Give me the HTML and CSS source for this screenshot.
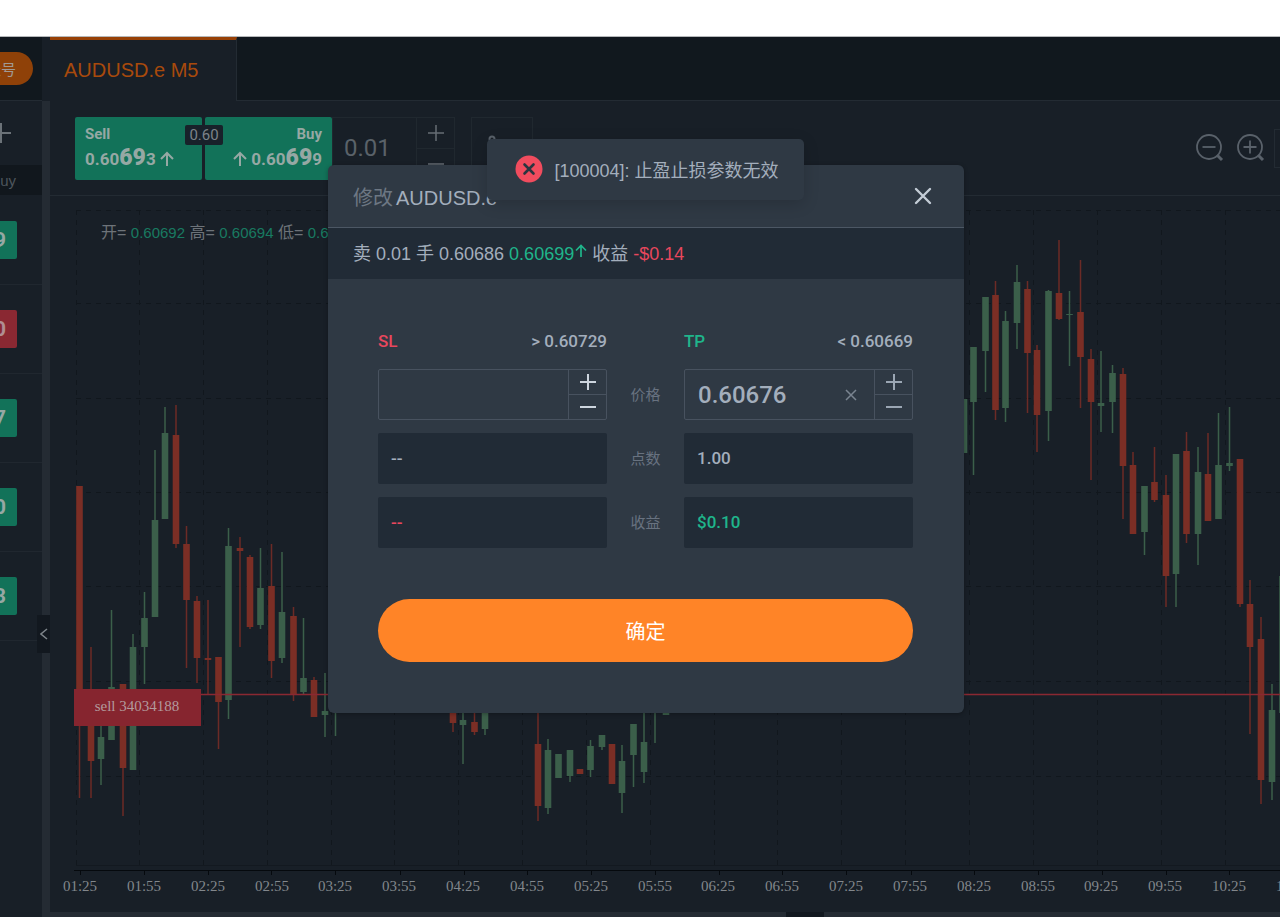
FILE: index.html
```html
<!DOCTYPE html>
<html lang="zh">
<head>
    <meta charset="UTF-8">
    <meta name="viewport" content="width=device-width, initial-scale=1.0">
    <title>AUDUSD.e M5</title>
    <link rel="stylesheet" href="styles.css">
</head>
<body>
    <div class="browser-bar"></div>
    <div class="app">
        <aside class="sidebar">
            <div class="sidebar-top">
                <button type="button" class="account-btn">账号</button>
            </div>
            <div class="sidebar-add">
                <button type="button" class="icon-btn" aria-label="添加">
                    <svg width="22" height="22" viewBox="0 0 22 22"><path d="M11 1V21M1 11H21" stroke="#6b7278" stroke-width="2"/></svg>
                </button>
            </div>
            <div class="sidebar-head">Buy</div>
            <ul class="quotes">
                <li><span class="quote up">9</span></li>
                <li><span class="quote down">0</span></li>
                <li><span class="quote up">7</span></li>
                <li><span class="quote up">0</span></li>
                <li><span class="quote up">3</span></li>
            </ul>
        </aside>
        <div class="splitter">
            <button type="button" class="collapse-btn" aria-label="收起">
                <svg width="8" height="14" viewBox="0 0 8 14"><path d="M7 2L1 7L7 12" fill="none" stroke="#7d8489" stroke-width="1.5"/></svg>
            </button>
        </div>

        <main class="main">
            <nav class="tabs">
                <a href="#" class="tab active">AUDUSD.e M5</a>
            </nav>

            <div class="toolbar">
                <div class="trade">
                    <button type="button" class="trade-btn">
                        <span>Sell</span>
                        <span class="price">0.60<b>69</b>3<svg width="14" height="16" viewBox="0 0 14 16"><path d="M7 15V2M1 8L7 2L13 8" fill="none" stroke="#96a8a4" stroke-width="2"/></svg></span>
                    </button>
                    <button type="button" class="trade-btn buy">
                        <span>Buy</span>
                        <span class="price"><svg width="14" height="16" viewBox="0 0 14 16"><path d="M7 15V2M1 8L7 2L13 8" fill="none" stroke="#96a8a4" stroke-width="2"/></svg>0.60<b>69</b>9</span>
                    </button>
                    <span class="spread">0.60</span>
                </div>
                <div class="volume">
                    <input type="text" value="0.01" aria-label="手数">
                    <div class="stepper">
                        <button type="button" aria-label="增加"><svg width="16" height="16" viewBox="0 0 16 16"><path d="M8 0V16M0 8H16" stroke="currentColor" stroke-width="1.5"/></svg></button>
                        <button type="button" aria-label="减少"><svg width="16" height="16" viewBox="0 0 16 16"><path d="M0 8H16" stroke="currentColor" stroke-width="1.5"/></svg></button>
                    </div>
                </div>
                <button type="button" class="tool-box" aria-label="图表类型">
                    <svg width="26" height="26" viewBox="0 0 26 26" fill="none" stroke="#59616a" stroke-width="2"><circle cx="4" cy="4" r="2.500"/><path d="M4 8V25H25"/></svg>
                </button>
                <div class="tools">
                    <button type="button" class="icon-btn" aria-label="缩小">
                        <svg width="28" height="28" viewBox="0 0 28 28" fill="none" stroke="#59616a" stroke-width="1.8"><circle cx="13" cy="13" r="12"/><path d="M6.500 13H19.500"/><path d="M21.500 21.500L26 26" stroke-width="3"/></svg>
                    </button>
                    <button type="button" class="icon-btn" aria-label="放大">
                        <svg width="28" height="28" viewBox="0 0 28 28" fill="none" stroke="#59616a" stroke-width="1.8"><circle cx="13" cy="13" r="12"/><path d="M6.500 13H19.500M13 6.500V19.500"/><path d="M21.500 21.500L26 26" stroke-width="3"/></svg>
                    </button>
                </div>
                <span class="tool-edge"></span>
            </div>

            <svg class="chart" width="100%" height="716">
                <!-- 网格 -->
                <g class="grid">
                    <path d="M26.500 14V671M89.500 14V671M153.500 14V671M217.500 14V671M281.500 14V671M344.500 14V671M408.500 14V671M472.500 14V671M536.500 14V671M600.500 14V671M664.500 14V671M727.500 14V671M791.500 14V671M855.500 14V671M919.500 14V671M983.500 14V671M1047.500 14V671M1111.500 14V671M1175.500 14V671"/>
                    <line x1="26" x2="100%" y1="14.500" y2="14.500"/>
                    <line x1="26" x2="100%" y1="107.500" y2="107.500"/>
                    <line x1="26" x2="100%" y1="202.500" y2="202.500"/>
                    <line x1="26" x2="100%" y1="296.500" y2="296.500"/>
                    <line x1="26" x2="100%" y1="390.500" y2="390.500"/>
                    <line x1="26" x2="100%" y1="485.500" y2="485.500"/>
                    <line x1="26" x2="100%" y1="580.500" y2="580.500"/>
                </g>

                <!-- 阳线 -->
                <path class="wick up" d="M51 530V589M61.500 414V544M83 438V574M94.500 396V488M105 254V421M115 211V323M178.500 332V523M210.500 352V433M232 356V467M253.500 422V499M275 477V541M285.500 504V540M413 504V568M435 504V539M498 543V618M520 554V586M540.500 544V581M552 539V554M572 549V617M583.500 528V591M594 516V587M605 504V547M923.500 151V279M935.500 101V196M955.500 115V226M967 69V153M998.500 94V245M1019.500 95V170M1051 155V236M1062.500 169V237M1094.500 290V359M1126 258V411M1148 251V369M1168.500 217V323M1179.500 211V275M1222 488V604"/>
                <path class="body up" d="M51 541V563M61.500 491V544M83 451V574M94.500 422V451M105 324V421M115 237V323M178.500 350V504M210.500 392V429M232 416V462M253.500 482V496M275 515V519M413 524V529M435 504V533M498 554V612M508.500 558V582M520 554V580M540.500 550V574M552 539V551M572 565V597M583.500 528V559M594 546V576M616 516V519M914 203V257M923.500 151V206M935.500 101V155M955.500 125V212M967 86V127M998.500 95V215M1019.500 118V119M1051 207V210M1062.500 177V206M1094.500 290V336M1126 258V378M1148 276V338M1168.500 269V323M1179.500 267V270M1222 514V586M1232.500 380V517"/>

                <!-- 阴线 -->
                <path class="wick down" d="M29.500 290V602M41 451V602M73 488V620M126 209V352M136.500 330V472M147 400V487M158 404V499M168.500 461V553M190 341V451M200 359V433M221.500 348V482M243.500 411V505M264 481V521M403 504V536M424.500 516V539M488 504V625M945.500 85V224M977.500 85V217M987 149V256M1009 44V124M1030.500 64V212M1041 153V284M1073 172V323M1083 256V338M1104.500 251V306M1116 279V411M1136.500 236V347M1158 237V325M1190 263V411M1200 384V538M1211 421V608"/>
                <path class="body down" d="M29.500 290V504M41 500V565M73 488V572M126 239V348M136.500 348V404M147 405V462M158 462V464M168.500 461V506M190 352V355M200 361V431M221.500 390V465M243.500 420V499M264 484V521M403 504V527M424.500 526V536M488 548V610M530 573V578M562 548V588M945.500 99V214M977.500 93V157M987 154V219M1009 97V123M1030.500 116V161M1041 163V206M1073 178V270M1083 269V338M1104.500 286V304M1116 299V380M1136.500 255V338M1158 278V325M1190 263V408M1200 408V451M1211 443V584"/>

                <!-- 持仓线 -->
                <line class="order-line" x1="151" x2="100%" y1="498.500" y2="498.500"/>
                <rect class="order-box" x="24" y="493" width="127" height="37"/>
                <text class="order-text" x="87" y="515">sell 34034188</text>

                <text class="ohlc" x="51" y="42">开= <tspan>0.60692</tspan> 高= <tspan>0.60694</tspan> 低= <tspan>0.60691</tspan></text>

                <!-- 时间轴 -->
                <line class="frame" x1="26" x2="100%" y1="669.500" y2="669.500"/>
                <line class="axis" x1="24" x2="100%" y1="674.500" y2="674.500"/>
                <path class="axis" d="M30.500 674V679M94.500 674V679M158.500 674V679M221.500 674V679M285.500 674V679M350.500 674V679M414.500 674V679M477.500 674V679M541.500 674V679M605.500 674V679M669.500 674V679M732.500 674V679M796.500 674V679M861.500 674V679M924.500 674V679M988.500 674V679M1052.500 674V679M1116.500 674V679M1179.500 674V679"/>
                <g class="times">
                    <text x="30" y="695">01:25</text>
                    <text x="94" y="695">01:55</text>
                    <text x="158" y="695">02:25</text>
                    <text x="222" y="695">02:55</text>
                    <text x="285" y="695">03:25</text>
                    <text x="349" y="695">03:55</text>
                    <text x="413" y="695">04:25</text>
                    <text x="477" y="695">04:55</text>
                    <text x="541" y="695">05:25</text>
                    <text x="605" y="695">05:55</text>
                    <text x="668" y="695">06:25</text>
                    <text x="732" y="695">06:55</text>
                    <text x="796" y="695">07:25</text>
                    <text x="860" y="695">07:55</text>
                    <text x="924" y="695">08:25</text>
                    <text x="988" y="695">08:55</text>
                    <text x="1051" y="695">09:25</text>
                    <text x="1115" y="695">09:55</text>
                    <text x="1179" y="695">10:25</text>
                    <text x="1243" y="695">10:55</text>
                </g>
            </svg>
            <div class="bottom-bar"><span class="bottom-handle"></span></div>
        </main>
    </div>

    <div class="modal-wrap">
        <div class="modal" role="dialog" aria-labelledby="modalTitle">
            <header class="modal-header">
                <h1 id="modalTitle"><span>修改</span>AUDUSD.e</h1>
                <button type="button" class="icon-btn" aria-label="关闭">
                    <svg width="18" height="18" viewBox="0 0 18 18"><path d="M2 2L16 16M16 2L2 16" stroke="#c3ccd6" stroke-width="2.400" stroke-linecap="round"/></svg>
                </button>
            </header>
            <p class="modal-info">卖 0.01 手 0.60686 <span class="green">0.60699<svg width="12" height="14" viewBox="0 0 12 14"><path d="M6 13V2M1 6.500L6 1.500L11 6.500" fill="none" stroke="currentColor" stroke-width="1.700"/></svg></span> 收益 <span class="red">-$0.14</span></p>
            <form class="modal-form">
                <div class="form-grid">
                    <div class="field-head"><label for="sl" class="red">SL</label><span>&gt; 0.60729</span></div>
                    <span></span>
                    <div class="field-head"><label for="tp" class="green">TP</label><span>&lt; 0.60669</span></div>

                    <div class="price-input bright">
                        <input type="text" id="sl">
                        <div class="stepper">
                            <button type="button" aria-label="增加"><svg width="16" height="16" viewBox="0 0 16 16"><path d="M8 0V16M0 8H16" stroke="currentColor" stroke-width="2"/></svg></button>
                            <button type="button" aria-label="减少"><svg width="16" height="16" viewBox="0 0 16 16"><path d="M0 8H16" stroke="currentColor" stroke-width="2"/></svg></button>
                        </div>
                    </div>
                    <span class="row-label">价格</span>
                    <div class="price-input">
                        <input type="text" id="tp" value="0.60676">
                        <button type="button" class="clear-btn" aria-label="清除"><svg width="12" height="12" viewBox="0 0 12 12"><path d="M1 1L11 11M11 1L1 11" stroke="#7a8490" stroke-width="1.500"/></svg></button>
                        <div class="stepper">
                            <button type="button" aria-label="增加"><svg width="16" height="16" viewBox="0 0 16 16"><path d="M8 0V16M0 8H16" stroke="currentColor" stroke-width="2"/></svg></button>
                            <button type="button" aria-label="减少"><svg width="16" height="16" viewBox="0 0 16 16"><path d="M0 8H16" stroke="currentColor" stroke-width="2"/></svg></button>
                        </div>
                    </div>

                    <output class="value" for="sl">--</output>
                    <span class="row-label">点数</span>
                    <output class="value" for="tp">1.00</output>

                    <output class="value red" for="sl">--</output>
                    <span class="row-label">收益</span>
                    <output class="value green" for="tp">$0.10</output>
                </div>
                <button type="submit" class="submit-btn">确定</button>
            </form>
        </div>
    </div>

    <div class="toast-wrap">
        <div class="toast" role="alert">
            <svg width="28" height="28" viewBox="0 0 28 28"><circle cx="14" cy="14" r="13.500" fill="#f14c5e"/><path d="M9.500 9.500L18.500 18.500M18.500 9.500L9.500 18.500" stroke="#2b3540" stroke-width="2.600" stroke-linecap="round"/></svg>
            <span>[100004]: 止盈止损参数无效</span>
        </div>
    </div>
</body>
</html>
```

FILE: styles.css
```css
* {
    margin: 0;
    padding: 0;
    box-sizing: border-box;
}

body {
    font-family: "Liberation Sans", "Noto Sans CJK SC", sans-serif;
    background: #181f27;
    color: #a3aebc;
    display: flex;
    flex-direction: column;
    min-height: 100vh;
    overflow: hidden;
    position: relative;
}

button,
input {
    font: inherit;
    color: inherit;
    background: none;
    border: none;
    outline: none;
}

button {
    cursor: pointer;
}

svg {
    display: block;
}

.red {
    color: #e8475d;
}

.green {
    color: #1fb58b;
}

.icon-btn {
    display: flex;
}

.browser-bar {
    height: 37px;
    background: #fff;
    border-bottom: 1px solid #b5b8ba;
}

.app {
    flex: 1;
    display: flex;
}

/* 左侧报价 */
.sidebar {
    width: 42px;
    flex: none;
    overflow: hidden;
}

.sidebar-top {
    height: 64px;
    display: flex;
    align-items: center;
    justify-content: flex-end;
    padding-right: 9px;
    background: #11181e;
    border-bottom: 1px solid #232b33;
}

.account-btn {
    flex: none;
    height: 33px;
    padding: 0 17px;
    border-radius: 17px;
    background: #8f4108;
    color: #a09a95;
    font-size: 15px;
}

.sidebar-add {
    height: 64px;
    display: flex;
    align-items: center;
    justify-content: flex-end;
    padding-right: 30px;
}

.sidebar-head {
    height: 30px;
    display: flex;
    align-items: center;
    justify-content: flex-end;
    padding-right: 26px;
    background: #11171d;
    color: #4d555c;
    font-size: 15px;
}

.quotes {
    list-style: none;
    padding-top: 1px;
}

.quotes li {
    height: 89px;
    display: flex;
    align-items: center;
    justify-content: flex-end;
    padding-right: 25px;
    border-bottom: 1px solid #20272f;
}

.quote {
    flex: none;
    width: 60px;
    height: 38px;
    padding-right: 11px;
    border-radius: 2px;
    font: bold 21px/38px Roboto, sans-serif;
    text-align: right;
    color: #96a8a4;
}

.quote.up {
    background: #127259;
}

.quote.down {
    background: #8a2832;
    color: #b08e92;
}

.splitter {
    width: 8px;
    flex: none;
    position: relative;
    margin-top: 64px;
    background: #242b33;
}

.collapse-btn {
    position: absolute;
    right: 0;
    top: 514px;
    width: 13px;
    height: 38px;
    display: flex;
    align-items: center;
    justify-content: center;
    background: #12181f;
}

/* 主区域 */
.main {
    flex: 1;
    min-width: 0;
    display: flex;
    flex-direction: column;
}

.tabs {
    height: 64px;
    display: flex;
    background: #11181e;
    border-bottom: 1px solid #232b33;
}

.tab {
    height: 64px;
    padding: 0 38px 0 14px;
    border-top: 3px solid #974006;
    border-right: 1px solid #232b33;
    background: #181f27;
    color: #a84a0c;
    font-size: 20px;
    line-height: 61px;
    text-decoration: none;
}

.toolbar {
    height: 95px;
    display: flex;
    align-items: center;
    padding-left: 25px;
    border-bottom: 1px solid #232b33;
}

.trade {
    display: flex;
    gap: 3px;
    position: relative;
}

.trade-btn {
    width: 127px;
    height: 63px;
    padding: 3px 10px 0;
    display: flex;
    flex-direction: column;
    justify-content: center;
    align-items: flex-start;
    border-radius: 2px;
    background: #127259;
    color: #96a8a4;
    font: bold 15px/18px Roboto, sans-serif;
}

.trade-btn.buy {
    align-items: flex-end;
}

.price {
    display: flex;
    align-items: baseline;
    font-size: 17px;
    line-height: 30px;
}

.price b {
    font-size: 23px;
}

.price svg {
    margin: 0 4px;
    align-self: center;
}

.spread {
    position: absolute;
    left: 110px;
    top: 8px;
    width: 38px;
    height: 20px;
    border-radius: 2px;
    background: #18212a;
    color: #7c8389;
    font: 15px/20px Roboto, sans-serif;
    text-align: center;
}

.volume {
    height: 63px;
    display: flex;
    border: 1px solid #20282f;
}

.volume input {
    width: 83px;
    padding-left: 11px;
    font: 24px Roboto, sans-serif;
    color: #5a6269;
}

.stepper {
    display: flex;
    flex-direction: column;
    width: 38px;
    flex: none;
    border-left: 1px solid #20282f;
    color: #656d74;
}

.stepper button {
    flex: 1;
    display: flex;
    align-items: center;
    justify-content: center;
}

.stepper button + button {
    border-top: 1px solid #20282f;
}

.tool-box {
    width: 62px;
    height: 63px;
    padding-left: 16px;
    margin-left: 16px;
    border: 1px solid #20282f;
}

.tools {
    margin-left: auto;
    display: flex;
    align-items: center;
    gap: 13px;
}

.tool-edge {
    width: 6px;
    height: 39px;
    margin-left: 9px;
    border: 1px solid #232b33;
    border-right: none;
}

/* 图表 */
.chart {
    flex: none;
}

.grid {
    fill: none;
    stroke: #11171d;
    stroke-dasharray: 5 5;
}

.wick {
    fill: none;
    stroke-width: 1.5px;
}

.body {
    fill: none;
    stroke-width: 6.6px;
}

.wick.up,
.body.up {
    stroke: #3b5f4a;
}

.wick.down,
.body.down {
    stroke: #7b2e25;
}

.wick.down {
    stroke: #6c2b26;
}

.order-line {
    stroke: #8a2832;
    stroke-width: 1.5px;
}

.order-box {
    fill: #86252f;
}

.order-text,
.times {
    font: 15px "Liberation Serif", serif;
    text-anchor: middle;
}

.order-text {
    fill: #b39a9d;
}

.times {
    fill: #82878c;
}

.ohlc {
    font-size: 16px;
    fill: #6d7379;
}

.ohlc tspan {
    font-size: 15px;
    fill: #187a61;
}

.axis {
    fill: none;
    stroke: #05090d;
}

.frame {
    stroke: #131920;
}

.bottom-bar {
    flex: 1;
    min-height: 5px;
    display: flex;
    justify-content: center;
    padding-left: 280px;
    background: #242b33;
}

.bottom-handle {
    width: 38px;
    background: #12181f;
}

/* 修改订单弹窗 */
.modal-wrap {
    position: absolute;
    inset: 165px 0 auto 12px;
    display: flex;
    justify-content: center;
}

.modal {
    width: 636px;
    border-radius: 6px;
    background: #2f3944;
    overflow: hidden;
    box-shadow: 0 1px 4px rgba(0, 0, 0, 0.3);
}

.modal-header {
    height: 63px;
    display: flex;
    align-items: center;
    justify-content: space-between;
    padding: 0 32px 0 25px;
    border-bottom: 1px solid #4c5764;
}

.modal-header h1 {
    display: flex;
    align-items: baseline;
    gap: 3px;
    font-size: 20px;
    font-weight: normal;
}

.modal-header h1 span {
    color: #6d7783;
}

.modal-info {
    height: 51px;
    padding: 0 25px;
    background: #212b36;
    font-size: 18px;
    line-height: 52px;
}

.modal-info svg {
    display: inline-block;
    margin-left: 1px;
    vertical-align: 2px;
}

.modal-form {
    padding: 50px 51px 51px 50px;
}

.form-grid {
    display: grid;
    grid-template-columns: 229px 1fr 229px;
    row-gap: 13px;
    font: 500 17px/24px Roboto, "Noto Sans CJK SC", sans-serif;
}

.field-head {
    display: flex;
    justify-content: space-between;
    margin-bottom: 3px;
}

.row-label {
    font: 15px/50px "Noto Sans CJK SC", sans-serif;
    text-align: center;
    color: #687280;
}

.price-input {
    height: 51px;
    display: flex;
    border: 1px solid #48525f;
    border-radius: 2px;
}

.price-input input {
    flex: 1;
    min-width: 0;
    padding-left: 13px;
    font-size: 24px;
    font-weight: 500;
}

.price-input .stepper {
    border-color: #48525f;
    color: #9ba6b3;
}

.price-input .stepper button + button {
    border-color: #48525f;
}

.price-input.bright .stepper {
    color: #cdd5de;
}

.clear-btn {
    width: 46px;
    display: flex;
    align-items: center;
    justify-content: center;
}

.value {
    height: 51px;
    padding-left: 13px;
    border-radius: 2px;
    background: #212b36;
    line-height: 50px;
}

.submit-btn {
    display: block;
    width: 100%;
    height: 63px;
    margin-top: 51px;
    border-radius: 32px;
    background: #ff8427;
    color: #fff;
    font-size: 20px;
}

/* 提示 */
.toast-wrap {
    position: absolute;
    inset: 139px 0 auto 11px;
    display: flex;
    justify-content: center;
}

.toast {
    height: 61px;
    display: flex;
    align-items: center;
    gap: 11px;
    padding: 0 25px 1px 28px;
    border-radius: 5px;
    background: #2f3944;
    box-shadow: 0 4px 16px rgba(0, 0, 0, 0.16);
    font-size: 18px;
}
```
